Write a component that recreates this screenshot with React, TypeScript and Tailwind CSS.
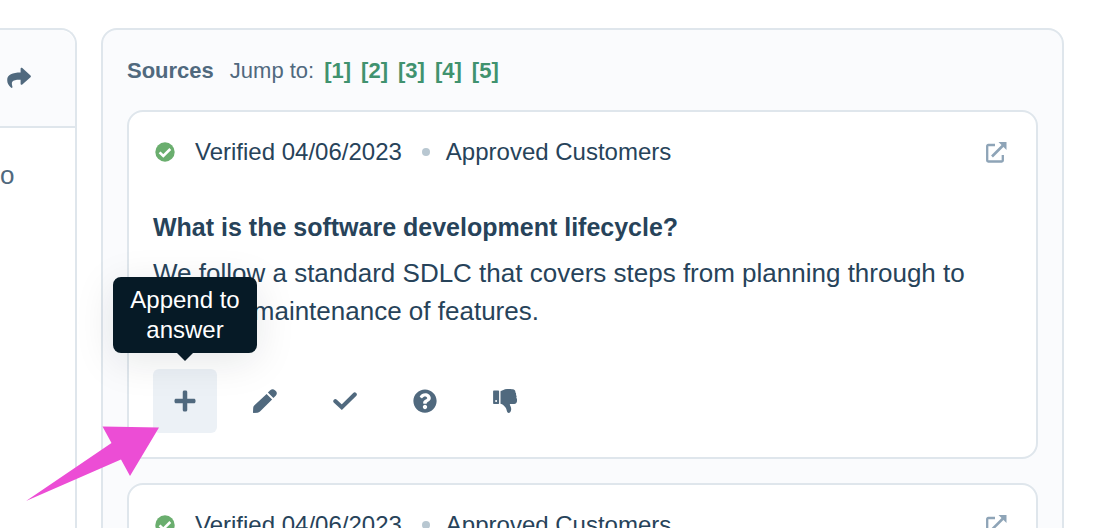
import { FaPlus, FaQuestionCircle } from "react-icons/fa";

interface Source {
  id: number;
  verified: string;
  collection: string;
  question: string;
  answer: string;
}

const sources: Source[] = [1, 2, 3, 4, 5].map((id) => ({
  id,
  verified: "Verified 04/06/2023",
  collection: "Approved Customers",
  question: "What is the software development lifecycle?",
  answer:
    "We follow a standard SDLC that covers steps from planning through to ongoing maintenance of features.",
}));

const ShareIcon = () => (
  <svg viewBox="0 0 24 24" className="h-6 w-6" fill="currentColor" aria-hidden="true">
    <path d="M13.600 2.800c0-.9 1-1.300 1.700-.7l8.200 7.300c.6.500.6 1.300 0 1.800l-8.200 7.200c-.7.600-1.700.2-1.700-.7V13.700c-4-.1-7 .2-8.300 2-.7 1.200-.5 2.700.1 4.800.3 1.400-.7 1.800-1.500.9C1.400 19.300.2 17.300.2 14.100.2 8.500 5.600 6.700 13.600 6.600z" />
  </svg>
);

const VerifiedIcon = () => (
  <svg viewBox="0 0 20 20" className="h-5 w-5" aria-hidden="true">
    <circle cx="10" cy="10" r="9.700" fill="#6aae6e" />
    <path d="M4.600 10.300l3.700 3.700 7-7" fill="none" stroke="#fff" strokeWidth="2.600" />
  </svg>
);

const ExternalIcon = () => (
  <svg viewBox="0 0 22 22" className="h-[22px] w-[22px]" fill="none" stroke="currentColor" strokeWidth="2.300" aria-hidden="true">
    <path d="M10 4H3.200a1 1 0 0 0-1 1v14.500a1 1 0 0 0 1 1h13.600a1 1 0 0 0 1-1V14" />
    <path d="M7 15.500L18 4.500" strokeWidth="2.600" />
    <path d="M13.500 1H21.500V9z" fill="currentColor" stroke="none" />
  </svg>
);

const PencilIcon = () => (
  <svg viewBox="0 0 24 24" className="h-6 w-6" fill="currentColor" aria-hidden="true">
    <path d="M13.600 4.900l5.500 5.500L7 22.500c-.7.700-1.500 1.100-2.500 1.200L.9 24a.8.8 0 0 1-.9-.9l.2-4.300c.1-.9.400-1.600 1-2.200z" />
    <path d="M14.900 3.600l2.300-2.300c1.500-1.500 3.300-1.500 4.700-.1l.9.9c1.400 1.400 1.400 3.200-.1 4.700l-2.300 2.300z" />
  </svg>
);

const CheckIcon = () => (
  <svg viewBox="0 0 24 24" className="h-6 w-6" fill="none" stroke="currentColor" strokeWidth="4.200" strokeLinecap="round" aria-hidden="true">
    <path d="M2.400 12.200L8.800 18.200 21.700 5.500" />
  </svg>
);

const ThumbsDownIcon = () => (
  <svg viewBox="0 0 24 24" className="h-6 w-6" fill="currentColor" aria-hidden="true">
    <path fillRule="evenodd" d="M.8 1.500h4.600c.4 0 .7.300.7.700v12c0 .4-.3.700-.7.700H.8a.7.700 0 0 1-.7-.7v-12c0-.4.3-.7.7-.7zM3.100 11.100a1 1 0 1 0 0 2 1 1 0 0 0 0-2z" />
    <path d="M7.500 2.200c2.300-.5 3.300-2 6.500-2.100 3-.2 5.500 0 6.800.5 1.400.6 1.700 1.700 1.500 2.600.8.700 1 1.700.7 2.700.7.900.8 2 .3 2.900.9 1.100.8 2.300.7 3.500-.2 1.600-1.300 2.600-2.800 2.600h-4.400c.1 1.600 1.500 3.100 1.400 5.300-.1 2.200-1.200 3.700-2.700 3.700-1.700 0-1.600-3.300-2.800-5.100-1.300-1.900-2.900-3.900-5.200-4.100z" />
  </svg>
);

const actions = [
  { label: "Append to answer", icon: <FaPlus className="h-6 w-6" />, active: true },
  { label: "Edit", icon: <PencilIcon /> },
  { label: "Mark as verified", icon: <CheckIcon /> },
  { label: "Ask a question", icon: <FaQuestionCircle className="h-6 w-6" /> },
  { label: "Not helpful", icon: <ThumbsDownIcon /> },
];

const Tooltip = ({ text }: { text: string }) => (
  <div
    role="tooltip"
    className="absolute bottom-full left-1/2 z-10 mb-4 w-36 -translate-x-1/2 rounded-lg bg-[#061a26] px-3 py-2 text-center text-2xl leading-[30px] text-white shadow-[0_8px_40px_rgba(6,26,38,0.1)]"
  >
    {text}
    <svg viewBox="0 0 16 8" className="absolute top-full left-1/2 h-2 w-4 -translate-x-1/2" fill="#061a26" aria-hidden="true">
      <path d="M0 0h16L8 8z" />
    </svg>
  </div>
);

const PointerArrow = () => (
  <svg
    viewBox="0 0 134 76"
    className="pointer-events-none absolute top-[426px] left-[26px] z-20 h-[76px] w-[134px]"
    fill="#ec4dd5"
    aria-hidden="true"
  >
    <path d="M0 75L85.500 17 76.500 0.500 133 1.600 104 50 95 33.500z" />
  </svg>
);

const SourceCard = ({ source, showTooltip }: { source: Source; showTooltip: boolean }) => {
  return (
    <article id={`source-${source.id}`} className="rounded-2xl border-2 border-[#dfe6ec] bg-white p-6 text-[#27435a]">
      <div className="flex h-8 items-center text-2xl">
        <span className="ml-0.5">
          <VerifiedIcon />
        </span>
        <span className="ml-5">{source.verified}</span>
        <span className="mr-4 ml-5 h-2 w-2 rounded-full bg-[#b8c7d1]" />
        <span>{source.collection}</span>
        <a href={`#source-${source.id}`} aria-label="Open source" className="mr-[5px] ml-auto text-[#8ea4b7]">
          <ExternalIcon />
        </a>
      </div>
      <h3 className="mt-10 text-[25px] leading-[38px] font-bold">{source.question}</h3>
      <p className="mt-2 text-[26px] leading-[38px]">{source.answer}</p>
      <div className="mt-[39px] flex gap-4 text-[#50697e]">
        {actions.map((action) => (
          <div key={action.label} className="relative">
            <button
              type="button"
              aria-label={action.label}
              className={
                action.active && showTooltip
                  ? "flex h-16 w-16 items-center justify-center rounded-md bg-[#ecf1f6]"
                  : "flex h-16 w-16 items-center justify-center rounded-md"
              }
            >
              {action.icon}
            </button>
            {action.active && showTooltip ? <Tooltip text={action.label} /> : null}
          </div>
        ))}
      </div>
    </article>
  );
};

const App = () => {
  return (
    <div className="relative flex h-screen gap-6 overflow-hidden bg-white pt-7 pr-8 font-['Liberation_Sans',Arial,sans-serif] text-[#50697e]">
      <section className="w-[77px] shrink-0 rounded-tr-2xl border-t-2 border-r-2 border-[#dfe6ec]">
        <div className="flex h-[98px] items-center rounded-tr-2xl border-b-2 border-[#dfe6ec] bg-[#fafbfd] pl-[7px]">
          <button type="button" aria-label="Share">
            <ShareIcon />
          </button>
        </div>
        <p className="mt-7 text-[26px] leading-[38px]">o</p>
      </section>

      <main className="h-fit min-w-0 flex-1 rounded-2xl border-2 border-[#dfe6ec] bg-[#fafbfd] p-6">
        <div className="flex h-8 items-center text-[22px]">
          <h2 className="font-bold">Sources</h2>
          <span className="ml-4">Jump to:</span>
          <nav className="ml-2.5 flex gap-2.5 font-bold text-[#40926f]">
            {sources.map((source) => (
              <a key={source.id} href={`#source-${source.id}`}>
                [{source.id}]
              </a>
            ))}
          </nav>
        </div>
        <div className="mt-6 flex flex-col gap-6">
          {sources.map((source, index) => (
            <SourceCard key={source.id} source={source} showTooltip={index === 0} />
          ))}
        </div>
      </main>
      <PointerArrow />
    </div>
  );
};

export default App;
